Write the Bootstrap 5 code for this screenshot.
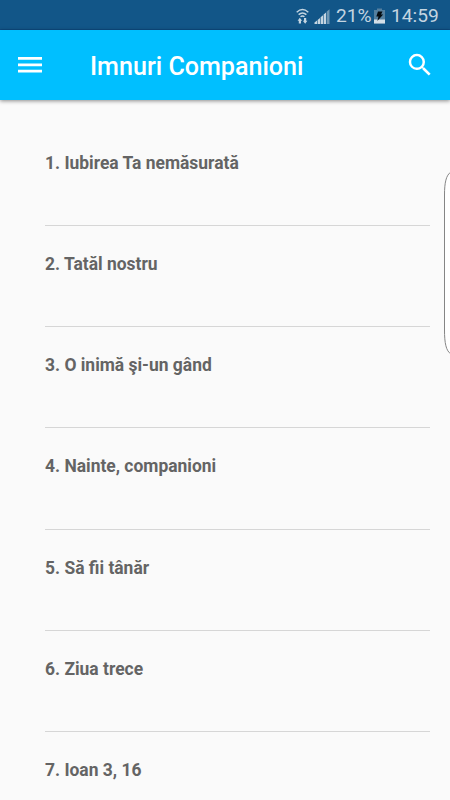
<!DOCTYPE html>
<html lang="ro">
<head>
<meta charset="utf-8">
<meta name="viewport" content="width=device-width, initial-scale=1">
<title>Imnuri Companioni</title>
<link href="https://cdn.jsdelivr.net/npm/bootstrap@5.3.0/dist/css/bootstrap.min.css" rel="stylesheet">
<style>
body { font-family: Roboto, sans-serif; background: #fafafa; height: 800px; }
.statusbar { height: 30px; background: #125688; color: #c4d5e1; font-size: 19.2px; line-height: 26px; padding: 3px 12px 0 0; border-bottom: 1px solid #0d4b82; }
.statusbar .pct { margin-left: 6px; width: 38px; }
.statusbar .clock { margin-left: 6px; width: 47px; }
.signal { margin-left: 3px; }
.appbar { height: 70px; background: #00bfff; box-shadow: 0 1px 4px rgba(0,0,0,.45); padding: 0 15px; }
.app-title { font-size: 25.1px; font-weight: 500; line-height: 30px; margin-left: 45px; padding-top: 3px; }
.hymns { padding: 24.6px 20px 0 45px; }
.hymn { height: 101.25px; padding-top: 26px; border-bottom: 1.25px solid #d6d6d6; color: #646464; font-size: 17.45px; font-weight: 700; line-height: 24px; }
.edge-handle { right: 0; top: 165px; }
</style>
</head>
<body class="position-relative overflow-hidden">
<div class="statusbar d-flex justify-content-end align-items-center">
  <svg class="flex-shrink-0" width="13" height="18" viewBox="0 0 13 18" fill="none" stroke="#c4d5e1" stroke-width="1.4">
    <path d="M.7 5.2Q6.5 0 12.3 5.2M2.6 7.6Q6.5 4.2 10.4 7.6M4.5 9.8Q6.5 8.2 8.5 9.8"/>
    <path d="M3.8 10.8l2.4 3H5v2.8H2.8v-2.8H1.6zM9.2 16.8l-2.4-3H8V11h2.2v2.8h1.2z" fill="#c4d5e1" stroke="none"/>
  </svg>
  <svg class="signal flex-shrink-0" width="18" height="17" viewBox="0 0 18 17" fill="#c4d5e1">
    <path d="M2.5 16v-1.5L5 12.6V16zM5.6 16v-4l2.4-2V16zM8.6 16V9.3l2.4-2V16zM11.6 16V6.6l2.4-2.2V16z"/>
    <path d="M14.6 16V3.8L17.5 1.3V16z" fill="#6f98b5"/>
  </svg>
  <span class="pct flex-shrink-0 text-nowrap">21%</span>
  <svg class="flex-shrink-0" width="11" height="16" viewBox="0 0 11 16">
    <path d="M0 2h3V.5h5V2h3v13.5H0z" fill="#547f9f"/>
    <path d="M0 11.5h11v4H0z" fill="#d3dfe8"/>
    <path d="M4 3.5h4.5L7 6.6h2.2L3.3 13l1.2-4.5H2.3z" fill="#050b10"/>
  </svg>
  <span class="clock flex-shrink-0 text-nowrap">14:59</span>
</div>
<nav class="appbar navbar flex-nowrap text-white">
  <svg width="30" height="30" viewBox="0 0 24 24" fill="#fff"><path d="M2.4 18h19.2v-2.2H2.4zM2.4 12.9h19.2v-2.2H2.4zM2.4 7.8h19.2V5.6H2.4z"/></svg>
  <h1 class="app-title mb-0 me-auto text-nowrap">Imnuri Companioni</h1>
  <svg width="30" height="30" viewBox="0 0 24 24" fill="#fff"><path d="M15.5 14h-.79l-.28-.27A6.471 6.471 0 0 0 16 9.5 6.5 6.5 0 1 0 9.5 16c1.61 0 3.09-.59 4.23-1.57l.27.28v.79l5 4.99L20.49 19zM9.5 14C7.01 14 5 11.99 5 9.5S7.01 5 9.5 5 14 7.01 14 9.5 11.99 14 9.5 14z"/></svg>
</nav>
<ul class="hymns list-unstyled mb-0">
  <li class="hymn">1. Iubirea Ta nemăsurată</li>
  <li class="hymn">2. Tatăl nostru</li>
  <li class="hymn" lang="tr">3. O inimă şi-un gând</li>
  <li class="hymn">4. Nainte, companioni</li>
  <li class="hymn">5. Să fii tânăr</li>
  <li class="hymn">6. Ziua trece</li>
  <li class="hymn">7. Ioan 3, 16</li>
</ul>
<svg class="edge-handle position-absolute" width="8" height="195" viewBox="0 0 8 195" fill="#fff" stroke="#858585"><path d="M9 7C4 10 2.5 18 2.5 30V165C2.5 178 4 186 9 189"/></svg>
<script src="https://cdn.jsdelivr.net/npm/bootstrap@5.3.0/dist/js/bootstrap.bundle.min.js"></script>
</body>
</html>
